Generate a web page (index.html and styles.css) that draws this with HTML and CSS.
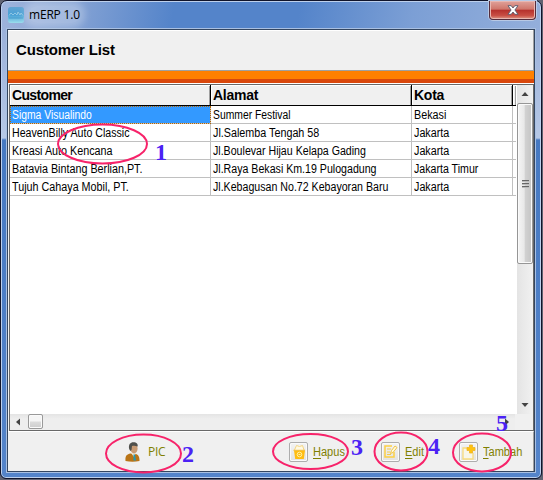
FILE: index.html
```html
<!DOCTYPE html>
<html lang="id">
<head>
<meta charset="utf-8">
<title>mERP 1.0</title>
<link rel="stylesheet" href="styles.css">
</head>
<body>
<div class="window">
  <header class="titlebar">
    <svg class="app-icon" width="16" height="16" viewBox="0 0 16 16"><defs><linearGradient id="ai" x2="0" y2="1"><stop stop-color="#62a4d3"/><stop offset=".5" stop-color="#48a0d5"/><stop offset="1" stop-color="#9bddec"/></linearGradient></defs><rect width="16" height="16" rx="2.5" fill="url(#ai)"/><path d="M1 8.500L3 6l2 2 2-2 2 2 1-3 2 3 1-2 2 2.500" fill="none" stroke="#9fcfe8" stroke-width=".8"/><path d="M1 11h14" stroke="#318ac4" opacity=".6"/></svg>
    <span class="caption">mERP 1.0</span>
    <div class="close"><svg width="12" height="10" viewBox="0 0 12 10"><path d="M1 .7h3.200L6 3 7.800.7H11L7.900 5 11 9.300H7.800L6 7 4.200 9.300H1L4.100 5z" fill="#fff" stroke="#56596c" stroke-width=".9"/></svg></div>
  </header>
  <main class="client">
    <h1 class="heading">Customer List</h1>
    <div class="stripe"></div>
    <section class="grid-box">
      <div class="grid-top">
        <div class="table">
          <div class="row head"><span class="first">Customer</span><span>Alamat</span><span>Kota</span><span></span></div>
          <div class="row"><span class="selected"><b class="tight">Sigma Visualindo</b></span><span><b class="tight">Summer Festival</b></span><span><b class="wide">Bekasi</b></span><span></span></div>
          <div class="row"><span><b>HeavenBilly Auto Classic</b></span><span><b class="wide">Jl.Salemba Tengah 58</b></span><span><b class="wide">Jakarta</b></span><span></span></div>
          <div class="row"><span><b class="wide">Kreasi Auto Kencana</b></span><span><b>Jl.Boulevar Hijau Kelapa Gading</b></span><span><b class="wide">Jakarta</b></span><span></span></div>
          <div class="row"><span><b class="wide">Batavia Bintang Berlian,PT.</b></span><span><b>Jl.Raya Bekasi Km.19 Pulogadung</b></span><span><b>Jakarta Timur</b></span><span></span></div>
          <div class="row"><span><b class="wide">Tujuh Cahaya Mobil, PT.</b></span><span><b>Jl.Kebagusan No.72 Kebayoran Baru</b></span><span><b class="wide">Jakarta</b></span><span></span></div>
        </div>
        <div class="vscroll">
          <svg class="arrow" width="16" height="18" viewBox="0 0 16 18"><path d="M4.500 11L8 7l3.500 4z" fill="#444"/></svg>
          <div class="vthumb"><i></i><i></i><i></i></div>
          <svg class="arrow" width="16" height="18" viewBox="0 0 16 18"><path d="M4.500 7L8 11l3.500-4z" fill="#444"/></svg>
        </div>
      </div>
      <div class="hscroll">
        <svg width="18" height="16" viewBox="0 0 18 16"><path d="M10 4.500L6 8l4 3.500z" fill="#444"/></svg>
        <div class="hthumb"></div>
        <svg class="right" width="18" height="16" viewBox="0 0 18 16"><path d="M8 4.500L12 8l-4 3.500z" fill="#444"/></svg>
        <div class="corner"></div>
      </div>
    </section>
    <footer class="actions">
      <div class="action pic">
        <svg width="17" height="20" viewBox="0 0 17 20"><path d="M1.500 19c-.5-5 1-6.500 5-7.500l5 .2c3 1 4 3 4 7.300q-7 1.500-14 0z" fill="#b97416"/><path d="M7 11l3 4 2-4z" fill="#eee7d5"/><path d="M9.500 12.500h1.500l1 6H9.500z" fill="#2597b4"/><ellipse cx="10" cy="6.500" rx="3.600" ry="5" fill="#c99b74"/><path d="M5.200 7C4 2 7 0 9.500.2c3 0 5 2 4 4.300-2-1-4-1-5.500-.5l-.5 4-1.300 1z" fill="#50504c"/></svg>
        <span class="plain">PIC</span>
      </div>
      <div class="action">
        <div class="btn"><svg width="14" height="16" viewBox="0 0 14 16"><path d="M2 6.500h11l-1.200 8.500H3.200z" fill="#ffbd12"/><path d="M2.500 6L4.500 1.500l3 1 3-1 1.500 4.500" fill="#fff9e3" stroke="#f5d580"/><path d="M1.500 6.300h11.500" stroke="#f3bb33"/><circle cx="7.500" cy="10.500" r="2.300" fill="none" stroke="#fff1a0"/><path d="M6.500 10.500h2" stroke="#fff1a0"/></svg></div>
        <span><u>H</u>apus</span>
      </div>
      <div class="action">
        <div class="btn"><svg width="15" height="15" viewBox="0 0 15 15"><path d="M9 2H2v11h9V8" fill="none" stroke="#fbd046" stroke-width="1.500"/><path d="M4 5h4M4 8h3M4 10.500h4" stroke="#f4cb4a"/><path d="M7.500 9.500l1-3L12 2l2 1.500-4 5z" fill="#fff9df" stroke="#f2c544"/></svg></div>
        <span><u>E</u>dit</span>
      </div>
      <div class="action">
        <div class="btn"><svg width="16" height="16" viewBox="0 0 16 16"><path d="M7 4H2v11h10V9" fill="#f8f6e9" stroke="#f7db7c" stroke-width="1.300"/><path d="M8.500 1h3v2.500H14v3h-2.500V9h-3V6.500H6v-3h2.500z" fill="#ffc20e" stroke="#edb425" stroke-width=".8" stroke-linejoin="round"/></svg></div>
        <span><u>T</u>ambah</span>
      </div>
    </footer>
  </main>
</div>
<svg class="annotations" width="543" height="480" viewBox="0 0 543 480">
  <g fill="none" stroke="#f7236a" stroke-width="2">
    <ellipse cx="102.500" cy="144" rx="44.500" ry="19.500"/>
    <ellipse cx="143.500" cy="453.500" rx="37.500" ry="19"/>
    <ellipse cx="310.500" cy="451.500" rx="37.500" ry="17.500"/>
    <ellipse cx="401" cy="451.500" rx="26.500" ry="19"/>
    <ellipse cx="482" cy="452.500" rx="29" ry="19"/>
  </g>
  <g class="numbers">
    <text x="155" y="160">1</text><text x="182" y="462">2</text><text x="351" y="455">3</text><text x="428" y="454">4</text><text x="496" y="431">5</text>
  </g>
</svg>
</body>
</html>
```
FILE: styles.css
```css
* { box-sizing: border-box; }
body { margin: 0; width: 543px; height: 480px; overflow: hidden; background: #606372; font-family: "Liberation Sans", Arial, sans-serif; color: #000; }
.window { width: 542px; height: 479px; border: 1px solid #10142b; border-radius: 7px 7px 6px 6px; padding: 0 6px 6px; background: linear-gradient(100deg, #9fb4dc 0, #7f9fd3 16%, #5484ca 32%, #5484ca 55%, #7c9fd5 76%, #94afdb 100%) 0 0 / 100% 29px no-repeat, linear-gradient(#93aad6 0, #b6c8e6 137px, #4679c2 139px, #5484ca 100%); box-shadow: inset 0 0 0 1px #bdd0ec; }
.titlebar { height: 28px; display: flex; align-items: flex-start; padding-left: 1px; }
.app-icon { margin-top: 6px; }
.caption { margin: 5px 0 0 5px; font: 12px/17px "Open Sans", "Noto Sans", sans-serif; letter-spacing: -.2px; background: rgba(255,255,255,.25); box-shadow: 0 0 7px 5px rgba(255,255,255,.25); border-radius: 8px; }
.close { width: 47px; height: 19px; margin: 0 -1px 0 auto; border: 1px solid #552c3b; border-top: 0; border-radius: 0 0 4px 4px; background: linear-gradient(#e0a39b 0, #cf756a 46%, #b5302b 50%, #c84d43 80%, #dd9684); box-shadow: inset 0 0 0 1px #e8b7b1, 0 0 0 1px #b8c9e5; display: flex; justify-content: center; align-items: center; }
.client { height: 443px; border: 1px solid #344660; box-shadow: 0 0 0 1px #a9c0e2; background: #f0f0f0; display: flex; flex-direction: column; }
.heading { height: 41px; flex: none; margin: 0; padding-left: 8px; font-size: 15px; line-height: 40px; letter-spacing: -.15px; border: solid #a0a0a0; border-width: 0 1px 1px 0; box-shadow: inset 0 1px #fff; }
.stripe { height: 13px; flex: none; background: #d9480c; border-top: 8px solid #ff8000; border-bottom: 1px solid #fff; }
.grid-box { height: 347px; flex: none; margin-left: 1px; border: 1px solid #696969; background: #fff; }
.grid-top { display: flex; height: 329px; }
.table { width: 506px; overflow: hidden; }
.row { display: grid; grid-template-columns: 201px 201px 101px 3px; grid-template-rows: 18px; height: 18px; }
.row > span { border: solid #c0c0c0; border-width: 0 1px 1px 0; padding-left: 2px; white-space: nowrap; min-width: 0; }
.row > span:last-child { border-right: 0; padding: 0; }
.row b { display: block; font: 12px/18px "Liberation Sans", Arial, sans-serif; transform: scaleX(.885); transform-origin: 0 50%; }
.row b.tight { transform: scaleX(.862); }
.row b.wide { transform: scaleX(.897); }
.row.head { height: 21px; grid-template-rows: 21px; }
.row.head > span { border-color: #000; background: #f0f0f0; font: bold 14px/21px "Liberation Sans", Arial, sans-serif; letter-spacing: -.25px; box-shadow: inset 1px 1px #fff, inset -1px 0 #a0a0a0; }
.row.head > .first { letter-spacing: -.65px; }
.row > .selected { background: #3399ff; color: #fff; outline: 1px dotted #b76600; outline-offset: -1px; border-color: #3399ff #c0c0c0 #c0c0c0; }
.vscroll { width: 16px; background: linear-gradient(90deg, #e4e4e4, #f1f1f1); display: flex; flex-direction: column; margin-left: auto; }
.vthumb { height: 161px; border: 1px solid #969696; border-radius: 2px; background: linear-gradient(90deg, #f5f5f5, #e8e8e8 45%, #d2d2d2 50%, #c4c4c4); box-shadow: inset 0 0 0 1px #fafafa; display: flex; flex-direction: column; gap: 1px; align-items: center; justify-content: center; }
.vthumb i { width: 7px; height: 2px; border-top: 1px solid #666; background: #bbb; }
.vscroll .arrow:last-child { margin-top: auto; }
.arrow { flex: none; }
.hscroll { height: 16px; display: flex; background: linear-gradient(#e4e4e4, #eee 30%); }
.hthumb { width: 15px; height: 15px; border: 1px solid #999; border-radius: 2px; background: linear-gradient(#f5f5f5 48%, #dcdcdc 52%, #cdcdcd); box-shadow: inset 0 0 0 1px #fafafa; }
.right { margin-left: auto; }
.corner { width: 18px; background: #f0f0f0; }
.actions { flex: 1; display: grid; grid-template-columns: 165px 92px 78px 1fr; padding-left: 116px; border-top: 1px solid #fff; border-right: 1px solid #a0a0a0; }
.action { height: 39px; display: flex; align-items: center; color: #808000; font-size: 12px; white-space: nowrap; }
.action span { margin-left: 5px; transform: scaleX(.92); transform-origin: 0 50%; }
.action .plain { font-family: "Open Sans", sans-serif; margin-left: 7px; letter-spacing: -.3px; transform: none; }
.btn { width: 19px; height: 20px; border: 1px solid #adadad; border-radius: 2px; background: linear-gradient(#f3f3f3, #e2e2e2); box-shadow: inset 0 0 0 1px #fafafa; display: flex; align-items: center; justify-content: center; }
u { text-underline-offset: 2px; }
.annotations { position: absolute; left: 0; top: 0; pointer-events: none; }
.numbers { font: bold 24px "Liberation Serif", "Times New Roman", serif; fill: #4b22f4; }
```
